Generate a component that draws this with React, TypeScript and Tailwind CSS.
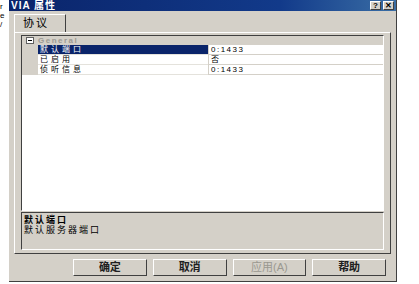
const font = { fontFamily: '"Liberation Sans", "Noto Sans CJK SC", sans-serif' };

function TitleButton({ children }: { children: React.ReactNode }) {
  return (
    <div className="flex h-[9px] w-[11px] items-center justify-center border border-t-white border-l-white border-r-[#404040] border-b-[#404040] bg-[#d4d0c8] text-[8px] leading-none font-bold text-black">
      {children}
    </div>
  );
}

function Button({ label, disabled }: { label: string; disabled?: boolean }) {
  return (
    <div
      className={`flex h-[17px] w-[75px] items-center justify-center border border-t-white border-l-white border-r-[#404040] border-b-[#404040] text-[11px] leading-none ${
        disabled ? "text-[#9a9890]" : "font-bold text-[#202020]"
      }`}
    >
      {label}
    </div>
  );
}

const rows = [
  { name: "默认端口", value: "0:1433", selected: true },
  { name: "已启用", value: "否" },
  { name: "侦听信息", value: "0:1433" },
];

export default function App() {
  return (
    <div className="flex h-[284px] w-[419px] overflow-hidden bg-white" style={font}>
      <div className="flex w-[9px] flex-col pt-[2px] text-[8px] leading-[9px] text-black">
        <span>r</span>
        <span>e</span>
        <span>/</span>
      </div>
      <div className="flex h-[282px] w-[388px] flex-col border-r border-b border-r-[#404040] border-b-[#404040] bg-[#d4d0c8]">
        <div className="flex h-[11px] items-center justify-between bg-[linear-gradient(90deg,#0a246a,#123a8a_70%,#3a6ea5)] pr-[2px] pl-[2px]">
          <span className="text-[10px] leading-none font-bold tracking-[1px] text-white">VIA 属性</span>
          <div className="flex gap-[2px]">
            <TitleButton>?</TitleButton>
            <TitleButton>✕</TitleButton>
          </div>
        </div>

        <div className="flex flex-col px-[5px] pt-[3px]">
          <div className="flex">
            <div className="flex h-[18px] w-[52px] items-center border border-b-0 border-t-white border-l-white border-r-[#404040] pl-[8px] text-[11px] leading-none tracking-[2px] text-black">
              协议
            </div>
          </div>
          <div className="flex h-[222px] flex-col border border-t-white border-l-white border-r-[#404040] border-b-[#404040] px-[6px] pt-[2px] pb-[3px]">
            <div className="flex h-[178px] flex-col border border-t-[#404040] border-l-[#404040] border-r-white border-b-white bg-white">
              <div className="flex h-[9px] items-center bg-[#d4d0c8]">
                <div className="flex w-[16px] justify-center">
                  <div className="flex h-[7px] w-[8px] items-center justify-center border border-[#606060] bg-white">
                    <div className="h-px w-[4px] bg-black" />
                  </div>
                </div>
                <span className="text-[8px] leading-none font-bold tracking-[1.5px] text-[#9c9a94]">General</span>
              </div>
              {rows.map((r) => (
                <div key={r.name} className="flex h-[10px] text-[8px] leading-[10px]">
                  <div className="w-[16px] bg-[#d4d0c8]" />
                  <div
                    className={`w-[170px] border-b border-[#e4e2dc] pl-[2px] tracking-[3px] ${
                      r.selected ? "bg-[#0a246a] text-white" : "text-black"
                    }`}
                  >
                    {r.name}
                  </div>
                  <div className="flex-1 border-b border-l border-[#d4d0c8] pl-[2px] tracking-[1.5px] text-black">
                    {r.value}
                  </div>
                </div>
              ))}
            </div>
            <div className="mt-px flex h-[38px] flex-col border border-t-[#404040] border-l-[#404040] border-r-white border-b-white px-[2px] pt-[2px] text-[9px] leading-[10px] tracking-[2px] text-black">
              <span className="font-bold">默认端口</span>
              <span>默认服务器端口</span>
            </div>
          </div>
        </div>

        <div className="mt-[5px] flex gap-[6px] pr-[10px] pl-[64px]">
          <Button label="确定" />
          <Button label="取消" />
          <Button label="应用(A)" disabled />
          <Button label="帮助" />
        </div>
      </div>
    </div>
  );
}
